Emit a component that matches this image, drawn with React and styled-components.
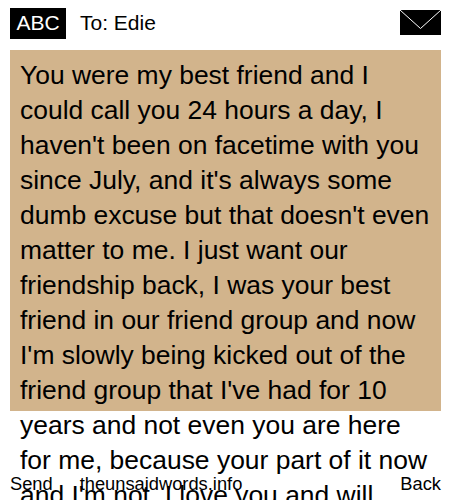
import styled, { createGlobalStyle } from 'styled-components';

const GlobalStyle = createGlobalStyle`
  html, body {
    margin: 0;
    padding: 0;
    background: #ffffff;
    overflow: hidden;
  }
`;

const Screen = styled.div`
  position: relative;
  width: 450px;
  height: 500px;
  overflow: hidden;
  font-family: "Liberation Sans", Arial, sans-serif;
  color: #000000;
`;

const Header = styled.div`
  display: flex;
  align-items: flex-start;
  height: 31px;
  padding: 8px 9px 11px 10px;
`;

const ModeBadge = styled.div`
  width: 56px;
  height: 31px;
  line-height: 29px;
  background: #000000;
  color: #ffffff;
  font-size: 21px;
  text-align: center;
`;

const Recipient = styled.div`
  flex: 1;
  margin-left: 14px;
  font-size: 21px;
  line-height: 29px;
`;

const Envelope = styled.svg`
  display: block;
  width: 41px;
  height: 25px;
  margin-top: 2px;
`;

const MessageBox = styled.div`
  box-sizing: border-box;
  width: 431px;
  height: 361px;
  margin-left: 10px;
  padding: 8px 10px 0;
  background: #d2b48c;
  font-size: 26.45px;
  line-height: 35px;
`;

const Footer = styled.div`
  position: absolute;
  left: 10px;
  right: 9px;
  bottom: 6px;
  display: flex;
  font-size: 18.3px;
  line-height: 20px;
`;

const FooterLink = styled.span`
  margin-left: ${(p) => p.$gap || 0}px;
`;

const BackLink = styled.span`
  margin-left: auto;
`;

const App = () => {
  return (
    <Screen>
      <GlobalStyle />
      <Header>
        <ModeBadge>ABC</ModeBadge>
        <Recipient>To: Edie</Recipient>
        <Envelope viewBox="0 0 41 25">
          <rect width="41" height="25" fill="#000" />
          <path d="M0 0 L20.5 18.5 L41 0" fill="none" stroke="#fff" strokeWidth="1" />
        </Envelope>
      </Header>
      <MessageBox>
        You were my best friend and I could call you 24 hours a day, I haven't been on facetime with you since July, and it's always some dumb excuse but that doesn't even matter to me. I just want our friendship back, I was your best friend in our friend group and now I'm slowly being kicked out of the friend group that I've had for 10 years and not even you are here for me, because your part of it now and I'm not. I love you and will
      </MessageBox>
      <Footer>
        <FooterLink>Send</FooterLink>
        <FooterLink $gap={27}>theunsaidwords.info</FooterLink>
        <BackLink>Back</BackLink>
      </Footer>
    </Screen>
  );
};

export default App;
